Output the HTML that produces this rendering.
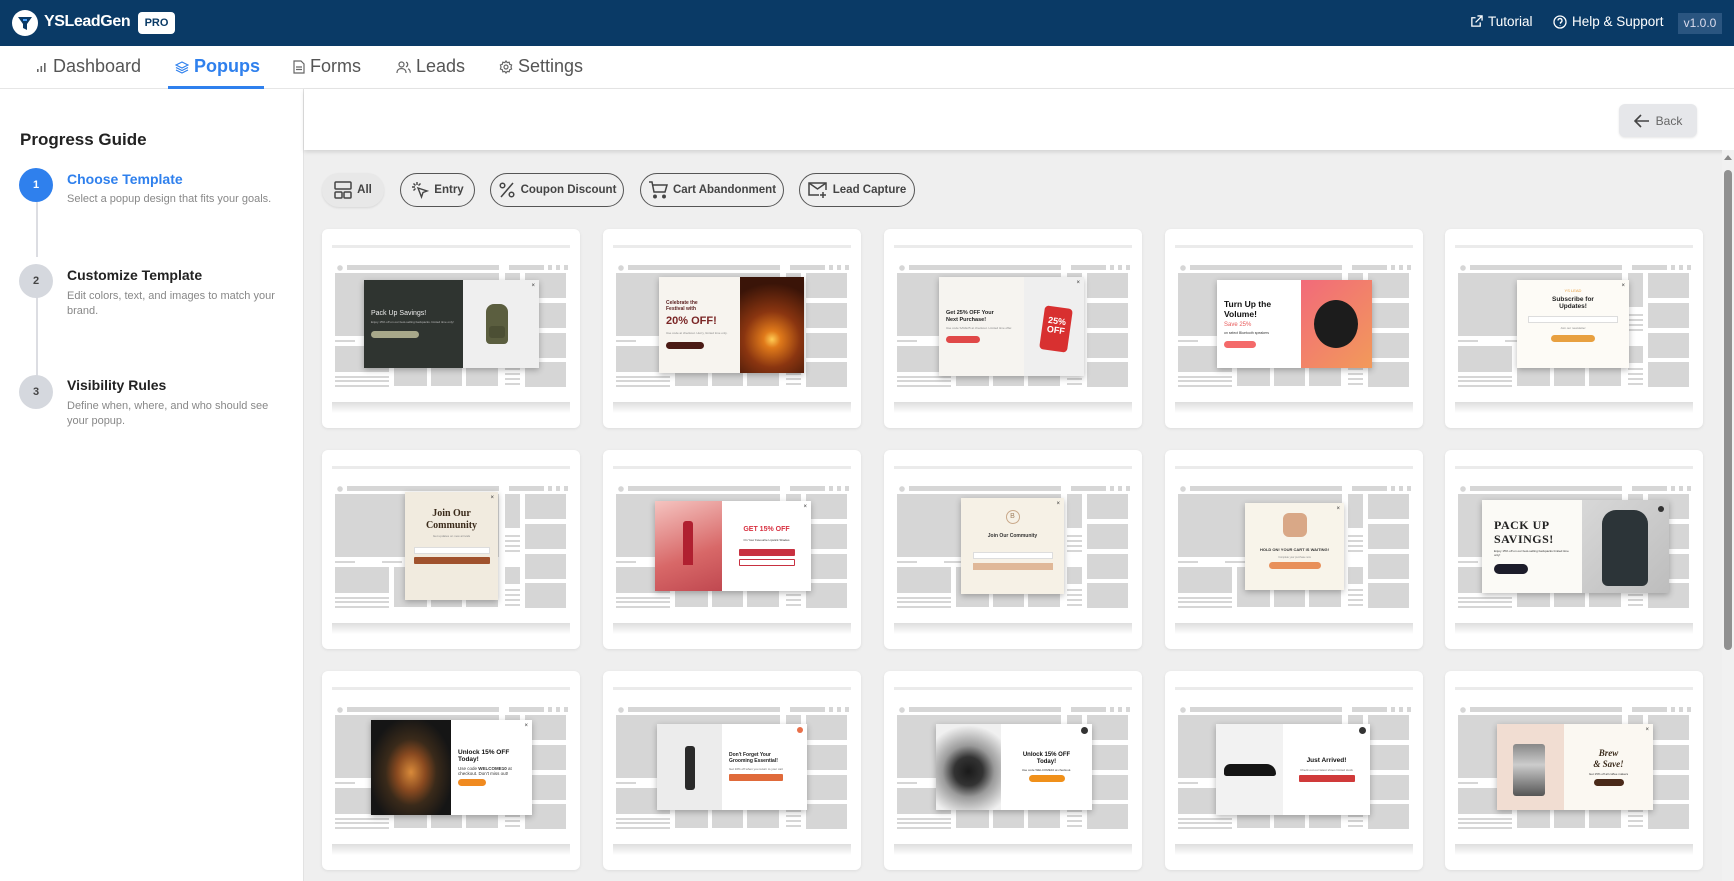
<!DOCTYPE html>
<html><head><meta charset="utf-8">
<style>
*{box-sizing:border-box;margin:0;padding:0}
body{width:1734px;height:881px;overflow:hidden;font-family:"Liberation Sans",sans-serif;background:#efefef;position:relative}
.hdr{position:absolute;left:0;top:0;width:1734px;height:46px;background:#0a3a66;color:#fff}
.nav{position:absolute;left:0;top:46px;width:1734px;height:43px;background:#fff;border-bottom:1px solid #e6e6e6}
.nav .t{position:absolute;top:10px;font-size:18px;color:#555;display:flex;align-items:center;gap:5px}
.side{position:absolute;left:0;top:89px;width:304px;height:792px;background:#fff;border-right:1px solid #e2e2e2}
.topbar{position:absolute;left:304px;top:89px;width:1430px;height:61px;background:#fff;box-shadow:0 2px 4px rgba(0,0,0,.12)}
.chip{position:absolute;top:173px;height:34px;border:1.5px solid #555;border-radius:17px;display:flex;align-items:center;justify-content:center;gap:5px;font-size:11.5px;font-weight:bold;color:#444}
.card{position:absolute;width:258px;height:199px;background:#fff;border-radius:6px;box-shadow:0 1px 3px rgba(0,0,0,.08)}
.wf{position:absolute;left:0;top:0;width:258px;height:199px;background:
linear-gradient(#ebebeb,#ebebeb) 10px 16px/238px 3px no-repeat,
radial-gradient(circle,#d6d6d6 2.5px,transparent 3px) 13px 34px/10px 10px no-repeat,
linear-gradient(#d6d6d6,#d6d6d6) 25px 36px/152px 5px no-repeat,
linear-gradient(#d6d6d6,#d6d6d6) 187px 36px/35px 5px no-repeat,
linear-gradient(#d6d6d6,#d6d6d6) 226px 36px/4px 5px no-repeat,
linear-gradient(#d6d6d6,#d6d6d6) 234px 36px/4px 5px no-repeat,
linear-gradient(#d6d6d6,#d6d6d6) 242px 36px/4px 5px no-repeat,
linear-gradient(#d6d6d6,#d6d6d6) 13px 44px/164px 63px no-repeat,
linear-gradient(#d6d6d6,#d6d6d6) 183px 44px/15px 34px no-repeat,
linear-gradient(#d6d6d6,#d6d6d6) 203px 44px/41px 25px no-repeat,
linear-gradient(#d6d6d6,#d6d6d6) 203px 74px/41px 25px no-repeat,
linear-gradient(#d6d6d6,#d6d6d6) 203px 104px/41px 25px no-repeat,
linear-gradient(#d6d6d6,#d6d6d6) 203px 133px/41px 25px no-repeat,
linear-gradient(#d6d6d6,#d6d6d6) 13px 111px/20px 2px no-repeat,
linear-gradient(#d6d6d6,#d6d6d6) 60px 111px/20px 2px no-repeat,
linear-gradient(#d6d6d6,#d6d6d6) 13px 117px/54px 26px no-repeat,
linear-gradient(#d6d6d6,#d6d6d6) 72px 117px/33px 40px no-repeat,
linear-gradient(#d6d6d6,#d6d6d6) 109px 117px/31px 40px no-repeat,
linear-gradient(#d6d6d6,#d6d6d6) 144px 117px/32px 40px no-repeat,
linear-gradient(#d6d6d6,#d6d6d6) 13px 147px/54px 2px no-repeat,
linear-gradient(#d6d6d6,#d6d6d6) 13px 151px/54px 2px no-repeat,
linear-gradient(#d6d6d6,#d6d6d6) 13px 156px/54px 2px no-repeat,
linear-gradient(#d6d6d6,#d6d6d6) 183px 85px/15px 2px no-repeat,
linear-gradient(#d6d6d6,#d6d6d6) 183px 90px/15px 2px no-repeat,
linear-gradient(#d6d6d6,#d6d6d6) 183px 95px/15px 2px no-repeat,
linear-gradient(#d6d6d6,#d6d6d6) 183px 100px/15px 2px no-repeat,
linear-gradient(#d6d6d6,#d6d6d6) 183px 117px/15px 17px no-repeat,
linear-gradient(#d6d6d6,#d6d6d6) 183px 139px/15px 2px no-repeat,
linear-gradient(#d6d6d6,#d6d6d6) 183px 144px/15px 2px no-repeat,
linear-gradient(#d6d6d6,#d6d6d6) 183px 149px/15px 2px no-repeat,
linear-gradient(#d6d6d6,#d6d6d6) 183px 154px/15px 2px no-repeat,
linear-gradient(#dedede,#fff) 10px 173px/238px 11px no-repeat}
.pp{position:absolute;box-shadow:0 2px 6px rgba(0,0,0,.28);overflow:hidden;display:flex;font-size:4px;color:#333}
.pp .l{padding:8px 7px;display:flex;flex-direction:column;justify-content:center;gap:3px}
.h{font-weight:bold;line-height:1.15}
.b{border-radius:4px;height:7px;width:40px}
.x{position:absolute;right:4px;top:3px;font-size:6px;color:#333}
</style></head><body>

<div class="hdr">
  <svg style="position:absolute;left:12px;top:10px" width="26" height="26" viewBox="0 0 26 26"><circle cx="13" cy="13" r="13" fill="#fff"/><path d="M6 7h14l-5 7v6l-4 -2v-4z" fill="#0a3a66"/><path d="M11 10l4 0" stroke="#4aa3ff" stroke-width="2"/></svg>
  <div style="position:absolute;left:44px;top:13px;font-size:16px;font-weight:bold;letter-spacing:-0.4px">YSLeadGen</div>
  <div style="position:absolute;left:138px;top:12px;width:37px;height:22px;background:#fff;border-radius:4px;color:#0a3a66;font-size:11px;font-weight:bold;text-align:center;line-height:22px">PRO</div>
  <div style="position:absolute;left:1470px;top:14px;font-size:13.5px;display:flex;gap:5px;align-items:center"><svg width="13" height="13" viewBox="0 0 14 14" fill="none" stroke="#fff" stroke-width="1.4"><path d="M11 8v4H2V3h4M8 1h5v5M13 1L6 8"/></svg>Tutorial</div>
  <div style="position:absolute;left:1553px;top:14px;font-size:13.5px;display:flex;gap:5px;align-items:center"><svg width="14" height="14" viewBox="0 0 14 14" fill="none" stroke="#fff" stroke-width="1.3"><circle cx="7" cy="7" r="6"/><path d="M5 5.5a2 2 0 1 1 2.5 2v1.2M7 10.5v.5"/></svg>Help &amp; Support</div>
  <div style="position:absolute;left:1678px;top:13px;width:44px;height:21px;background:#2a5580;font-size:12px;text-align:center;line-height:21px;color:#dde">v1.0.0</div>
</div>

<div class="nav">
  <div class="t" style="left:36px"><svg width="12" height="12" viewBox="0 0 12 12"><rect x="1" y="8" width="1.6" height="3" fill="#666"/><rect x="4.5" y="5" width="1.6" height="6" fill="#666"/><rect x="8" y="2" width="1.6" height="9" fill="#666"/></svg>Dashboard</div>
  <div class="t" style="left:175px;color:#2f80ed;font-weight:bold"><svg width="14" height="14" viewBox="0 0 14 14" fill="none" stroke="#2f80ed" stroke-width="1.2"><path d="M7 2l6 3-6 3-6-3z"/><path d="M1 7.5l6 3 6-3M1 10l6 3 6-3"/></svg>Popups</div>
  <div style="position:absolute;left:168px;top:40px;width:96px;height:3px;background:#2f80ed"></div>
  <div class="t" style="left:293px"><svg width="12" height="14" viewBox="0 0 12 14" fill="none" stroke="#666" stroke-width="1.2"><path d="M1 1h7l3 3v9H1z"/><path d="M3 7h6M3 9.5h6"/></svg>Forms</div>
  <div class="t" style="left:396px"><svg width="15" height="14" viewBox="0 0 15 14" fill="none" stroke="#666" stroke-width="1.2"><circle cx="5.5" cy="4.5" r="2.5"/><path d="M1 13c0-3 2-4.5 4.5-4.5S10 10 10 13M10 2.2a2.4 2.4 0 0 1 0 4.6M12 8.8c1.5.6 2.3 2 2.3 4"/></svg>Leads</div>
  <div class="t" style="left:499px"><svg width="14" height="14" viewBox="0 0 14 14" fill="none" stroke="#666" stroke-width="1.2"><circle cx="7" cy="7" r="2"/><path d="M7 1l1.2 1.6 2-.4.4 2L12.6 5 12 7l.6 2-2 .8-.4 2-2-.4L7 13l-1.2-1.6-2 .4-.4-2L1.4 9 2 7l-.6-2 2-.8.4-2 2 .4z"/></svg>Settings</div>
</div>

<div class="side">
  <div style="position:absolute;left:20px;top:41px;font-size:17px;font-weight:bold;color:#222">Progress Guide</div>
  <div style="position:absolute;left:36px;top:112px;width:2px;height:56px;background:#dcdde2"></div>
  <div style="position:absolute;left:36px;top:208px;width:2px;height:85px;background:#dcdde2"></div>
  <div style="position:absolute;left:19px;top:79px;width:34px;height:34px;border-radius:50%;background:#2f80ed;color:#fff;font-size:11px;font-weight:bold;text-align:center;line-height:34px">1</div>
  <div style="position:absolute;left:67px;top:82px;font-size:14px;font-weight:bold;color:#2f80ed">Choose Template</div>
  <div style="position:absolute;left:67px;top:104px;font-size:11px;color:#888">Select a popup design that fits your goals.</div>
  <div style="position:absolute;left:19px;top:175px;width:34px;height:34px;border-radius:50%;background:#d5d8de;color:#444;font-size:11px;font-weight:bold;text-align:center;line-height:34px">2</div>
  <div style="position:absolute;left:67px;top:178px;font-size:14px;font-weight:bold;color:#222">Customize Template</div>
  <div style="position:absolute;left:67px;top:200px;font-size:11px;color:#888;width:220px;line-height:15px">Edit colors, text, and images to match your brand.</div>
  <div style="position:absolute;left:19px;top:286px;width:34px;height:34px;border-radius:50%;background:#d5d8de;color:#444;font-size:11px;font-weight:bold;text-align:center;line-height:34px">3</div>
  <div style="position:absolute;left:67px;top:288px;font-size:14px;font-weight:bold;color:#222">Visibility Rules</div>
  <div style="position:absolute;left:67px;top:310px;font-size:11px;color:#888;width:220px;line-height:15px">Define when, where, and who should see your popup.</div>
</div>

<div class="topbar">
  <div style="position:absolute;left:1315px;top:15px;width:78px;height:33px;background:#e6e7ea;border-radius:6px;box-shadow:0 1px 2px rgba(0,0,0,.1);font-size:12px;color:#666;display:flex;align-items:center;justify-content:center;gap:6px"><svg width="16" height="14" viewBox="0 0 16 14" fill="none" stroke="#444" stroke-width="1.6"><path d="M15 7H2M7 1L1 7l6 6"/></svg>Back</div>
</div>

<div class="chip" style="left:322px;width:62px;border:none;background:#e8e8e8;box-shadow:0 1px 2px rgba(0,0,0,.1)"><svg width="18" height="18" viewBox="0 0 18 18" fill="none" stroke="#444" stroke-width="1.5"><rect x="1" y="1" width="16" height="7" rx="1"/><rect x="1" y="11" width="7" height="6" rx="1"/><rect x="10" y="11" width="7" height="6" rx="1"/></svg>All</div>
<div class="chip" style="left:400px;width:75px"><svg width="18" height="18" viewBox="0 0 18 18" fill="none" stroke="#444" stroke-width="1.4"><path d="M7 7l9 3-4 1.5L10.5 16z"/><path d="M6 1v3M1 6h3M2.5 2.5l2 2M9.5 2.5l-2 2M2.5 9.5l2-2"/></svg>Entry</div>
<div class="chip" style="left:490px;width:134px"><svg width="18" height="18" viewBox="0 0 18 18" fill="none" stroke="#444" stroke-width="1.5"><path d="M15 2L3 16"/><circle cx="4.5" cy="4.5" r="2.3"/><circle cx="13.5" cy="13.5" r="2.3"/></svg>Coupon Discount</div>
<div class="chip" style="left:640px;width:144px"><svg width="20" height="18" viewBox="0 0 20 18" fill="none" stroke="#444" stroke-width="1.5"><path d="M1 1h3l2 10h11l2-7H5"/><circle cx="7" cy="15.5" r="1.2" fill="#444"/><circle cx="16" cy="15.5" r="1.2" fill="#444"/></svg>Cart Abandonment</div>
<div class="chip" style="left:799px;width:116px"><svg width="20" height="18" viewBox="0 0 20 18" fill="none" stroke="#444" stroke-width="1.5"><path d="M11 14H1V2h17v7"/><path d="M1 2l8.5 6L18 2M15 11v6M12 14h6"/></svg>Lead Capture</div>

<!-- ROW 1 -->
<div class="card" style="left:322px;top:229px"><div class="wf"></div>
 <div class="pp" style="left:42px;top:51px;width:175px;height:88px">
  <div class="l" style="width:99px;background:#2f3430;color:#eee"><div style="font-size:7px">Pack Up Savings!</div><div style="font-size:3px;color:#bbb">Enjoy 15% off on our best-selling backpacks. limited time only!</div><div class="b" style="background:#a8a88a;width:48px;margin-top:4px"></div></div>
  <div style="flex:1;background:#efefef;position:relative"><div style="position:absolute;left:23px;top:24px;width:22px;height:40px;background:#5b5e3f;border-radius:8px 8px 4px 4px"></div><div style="position:absolute;left:26px;top:46px;width:16px;height:12px;background:#4c4f34;border-radius:3px"></div><span class="x">×</span></div>
 </div></div>

<div class="card" style="left:603px;top:229px"><div class="wf"></div>
 <div class="pp" style="left:56px;top:48px;width:145px;height:96px">
  <div class="l" style="width:81px;background:#f7f4ef;color:#5a1e1e"><div class="h" style="font-size:5px">Celebrate the<br>Festival with</div><div class="h" style="font-size:11px;color:#7a2525">20% OFF!</div><div style="font-size:3px;color:#888">Use code at checkout. Hurry, limited time only.</div><div class="b" style="background:#4a1a14;width:38px;margin-top:4px"></div></div>
  <div style="flex:1;background:radial-gradient(circle at 50% 65%,#ffcc55 0,#e07a1a 12%,#8a3510 40%,#3a1408 80%)"></div>
 </div></div>

<div class="card" style="left:884px;top:229px"><div class="wf"></div>
 <div class="pp" style="left:55px;top:48px;width:145px;height:99px;background:#f6f4f0">
  <div class="l" style="width:85px"><div class="h" style="font-size:5.5px;color:#222">Get 25% OFF Your<br>Next Purchase!</div><div style="font-size:3px;color:#888">Use code SAVE25 at checkout. Limited time offer.</div><div class="b" style="background:#e04848;width:34px;margin-top:3px"></div></div>
  <div style="flex:1;background:#efefef;position:relative"><div style="position:absolute;left:18px;top:30px;width:28px;height:44px;background:#d83030;border-radius:4px;transform:rotate(8deg);color:#fff;font-weight:bold;font-size:9px;text-align:center;padding-top:10px;line-height:1">25%<br>OFF</div><span class="x">×</span></div>
 </div></div>

<div class="card" style="left:1165px;top:229px"><div class="wf"></div>
 <div class="pp" style="left:52px;top:51px;width:155px;height:88px;background:#fff">
  <div class="l" style="width:84px"><div class="h" style="font-size:8.5px;color:#111">Turn Up the<br>Volume!</div><div style="font-size:6px;color:#e85a5a">Save 25%</div><div style="font-size:3.5px">on select Bluetooth speakers</div><div class="b" style="background:#f46a6a;width:32px;margin-top:3px"></div></div>
  <div style="flex:1;background:linear-gradient(135deg,#f26a7a,#f29a5a);position:relative"><div style="position:absolute;left:13px;top:20px;width:44px;height:48px;border-radius:50%;background:#1c1c1c"></div></div>
 </div></div>

<div class="card" style="left:1445px;top:229px"><div class="wf"></div>
 <div class="pp" style="left:72px;top:51px;width:112px;height:88px;background:#fdfbf6;flex-direction:column;align-items:center;padding-top:8px;gap:3px">
  <div style="font-size:4px;color:#e8a040">YS LEAD</div><div class="h" style="font-size:6.5px;text-align:center;color:#222">Subscribe for<br>Updates!</div><div style="width:90px;height:7px;border:1px solid #ddd;background:#fff;margin-top:2px"></div><div style="font-size:3px;color:#888">Join our newsletter</div><div class="b" style="background:#e8a040;width:44px;margin-top:2px"></div><span class="x">×</span>
 </div></div>

<!-- ROW 2 -->
<div class="card" style="left:322px;top:450px"><div class="wf"></div>
 <div class="pp" style="left:83px;top:42px;width:93px;height:108px;background:#f1ebdf;flex-direction:column;align-items:center;padding-top:16px;gap:3px">
  <div class="h" style="font-family:'Liberation Serif',serif;font-size:10px;text-align:center;color:#3a2a1a">Join Our<br>Community</div><div style="font-size:3px;color:#888">Get updates on new arrivals</div><div style="width:76px;height:7px;border:1px solid #ddd;background:#fff;margin-top:6px"></div><div style="width:76px;height:7px;background:#a0522d;border-radius:1px"></div><span class="x">×</span>
 </div></div>

<div class="card" style="left:603px;top:450px"><div class="wf"></div>
 <div class="pp" style="left:52px;top:51px;width:156px;height:90px;background:#fff">
  <div style="width:67px;background:linear-gradient(160deg,#f5c4c0,#d86868 60%,#c04850);position:relative"><div style="position:absolute;left:28px;top:20px;width:10px;height:44px;background:#b02030;border-radius:3px 3px 0 0"></div></div>
  <div class="l" style="flex:1;align-items:center"><div class="h" style="font-size:7px;color:#d83040">GET 15% OFF</div><div style="font-size:3px">On Your Favourite Lipstick Shades</div><div class="b" style="background:#c83040;width:56px;border-radius:1px;margin-top:4px"></div><div class="b" style="border:1px solid #c83040;width:56px;border-radius:1px"></div></div><span class="x">×</span>
 </div></div>

<div class="card" style="left:884px;top:450px"><div class="wf"></div>
 <div class="pp" style="left:77px;top:48px;width:103px;height:96px;background:#f6f1e6;flex-direction:column;align-items:center;padding-top:12px;gap:4px">
  <div style="width:14px;height:14px;border-radius:50%;border:1px solid #c9a98a;font-size:7px;text-align:center;line-height:12px;color:#a08060">B</div><div class="h" style="font-size:5px;color:#333;margin-top:6px">Join Our Community</div><div style="width:80px;height:7px;border:1px solid #ddd;background:#fff;margin-top:8px"></div><div style="width:80px;height:7px;background:#e0b898"></div><span class="x">×</span>
 </div></div>

<div class="card" style="left:1165px;top:450px"><div class="wf"></div>
 <div class="pp" style="left:80px;top:53px;width:99px;height:87px;background:#f8f4ea;flex-direction:column;align-items:center;padding-top:10px;gap:3px">
  <div style="width:24px;height:24px;border-radius:6px;background:#d9a887"></div><div class="h" style="font-size:4px;color:#333;margin-top:8px">HOLD ON! YOUR CART IS WAITING!</div><div style="font-size:2.5px;color:#888">Complete your purchase now</div><div class="b" style="background:#e8905a;width:52px;border-radius:4px"></div><span class="x">×</span>
 </div></div>

<div class="card" style="left:1445px;top:450px"><div class="wf"></div>
 <div class="pp" style="left:37px;top:50px;width:187px;height:93px;background:#fbfaf6">
  <div class="l" style="width:100px;padding-left:12px"><div class="h" style="font-family:'Liberation Serif',serif;font-size:12px;color:#222;letter-spacing:.5px">PACK UP<br>SAVINGS!</div><div style="font-size:3px">Enjoy 15% off on our best-selling backpacks limited time only!</div><div class="b" style="background:#1c1c2a;width:34px;height:10px;border-radius:5px;margin-top:4px"></div></div>
  <div style="flex:1;background:linear-gradient(135deg,#d8d8d8,#bdbdbd);position:relative"><div style="position:absolute;left:20px;top:10px;width:46px;height:76px;background:#2c3438;border-radius:14px 14px 6px 6px"></div><div style="position:absolute;right:5px;top:6px;width:6px;height:6px;border-radius:50%;background:#333"></div></div>
 </div></div>

<!-- ROW 3 -->
<div class="card" style="left:322px;top:671px"><div class="wf"></div>
 <div class="pp" style="left:49px;top:49px;width:161px;height:95px;background:#fff">
  <div style="width:80px;background:radial-gradient(ellipse at 50% 55%,#d88a3a 0,#8a4a20 25%,#3a2a1a 45%,#151515 75%)"></div>
  <div class="l" style="flex:1"><div class="h" style="font-size:6.5px;color:#111">Unlock 15% OFF<br>Today!</div><div style="font-size:4.5px">Use code <b>WELCOME10</b> at checkout. Don't miss out!</div><div class="b" style="background:#f08a20;width:28px"></div></div><span class="x">×</span>
 </div></div>

<div class="card" style="left:603px;top:671px"><div class="wf"></div>
 <div class="pp" style="left:54px;top:53px;width:150px;height:86px;background:#fff">
  <div style="width:65px;background:#ececec;position:relative"><div style="position:absolute;left:28px;top:22px;width:10px;height:44px;background:#2a2a2a;border-radius:3px"></div></div>
  <div class="l" style="flex:1"><div class="h" style="font-size:5px;color:#222">Don't Forget Your<br>Grooming Essential!</div><div style="font-size:3px;color:#666">Get 10% off when you return to your cart</div><div class="b" style="background:#e06a3a;width:54px;border-radius:1px"></div></div><div style="position:absolute;right:4px;top:3px;width:6px;height:6px;border-radius:50%;background:#e8704a"></div>
 </div></div>

<div class="card" style="left:884px;top:671px"><div class="wf"></div>
 <div class="pp" style="left:52px;top:53px;width:156px;height:86px;background:#fff">
  <div style="width:65px;background:radial-gradient(circle at 50% 55%,#1a1a1a 0,#333 25%,#9a9a9a 45%,#f0f0f0 80%)"></div>
  <div class="l" style="flex:1;align-items:center;text-align:center"><div class="h" style="font-size:6px;color:#111">Unlock 15% OFF<br>Today!</div><div style="font-size:3px">Use code WELCOME10 at checkout.</div><div class="b" style="background:#f0901a;width:36px"></div></div><div style="position:absolute;right:4px;top:3px;width:7px;height:7px;border-radius:50%;background:#333"></div>
 </div></div>

<div class="card" style="left:1165px;top:671px"><div class="wf"></div>
 <div class="pp" style="left:51px;top:53px;width:154px;height:91px;background:#fff">
  <div style="width:67px;background:#f2f2f2;position:relative"><div style="position:absolute;left:8px;top:40px;width:52px;height:12px;background:#151515;border-radius:8px 12px 3px 3px"></div></div>
  <div class="l" style="flex:1;align-items:center;text-align:center"><div class="h" style="font-size:6.5px;color:#111">Just Arrived!</div><div style="font-size:3px;color:#666">Check out our latest shoes limited stock</div><div class="b" style="background:#d03a3a;width:56px;border-radius:1px"></div></div><div style="position:absolute;right:4px;top:3px;width:7px;height:7px;border-radius:50%;background:#333"></div>
 </div></div>

<div class="card" style="left:1445px;top:671px"><div class="wf"></div>
 <div class="pp" style="left:52px;top:53px;width:156px;height:86px;background:#fbf8f2">
  <div style="width:67px;background:#f1ddd2;position:relative"><div style="position:absolute;left:16px;top:20px;width:32px;height:52px;background:linear-gradient(#888,#ccc 40%,#555);border-radius:3px"></div></div>
  <div class="l" style="flex:1;align-items:center;text-align:center"><div class="h" style="font-family:'Liberation Serif',serif;font-style:italic;font-size:9px;color:#3a2a1a">Brew<br>&amp; Save!</div><div style="font-size:3px">Get 15% off all coffee makers</div><div class="b" style="background:#4a2a1a;width:30px"></div></div><span class="x">×</span>
 </div></div>

<!-- scrollbar -->
<div style="position:absolute;left:1722px;top:150px;width:12px;height:731px;background:#f1f1f1"></div>
<div style="position:absolute;left:1724px;top:155px;width:0;height:0;border-left:4px solid transparent;border-right:4px solid transparent;border-bottom:5px solid #888"></div>
<div style="position:absolute;left:1724px;top:170px;width:8px;height:480px;background:#909090;border-radius:4px"></div>
</body></html>
